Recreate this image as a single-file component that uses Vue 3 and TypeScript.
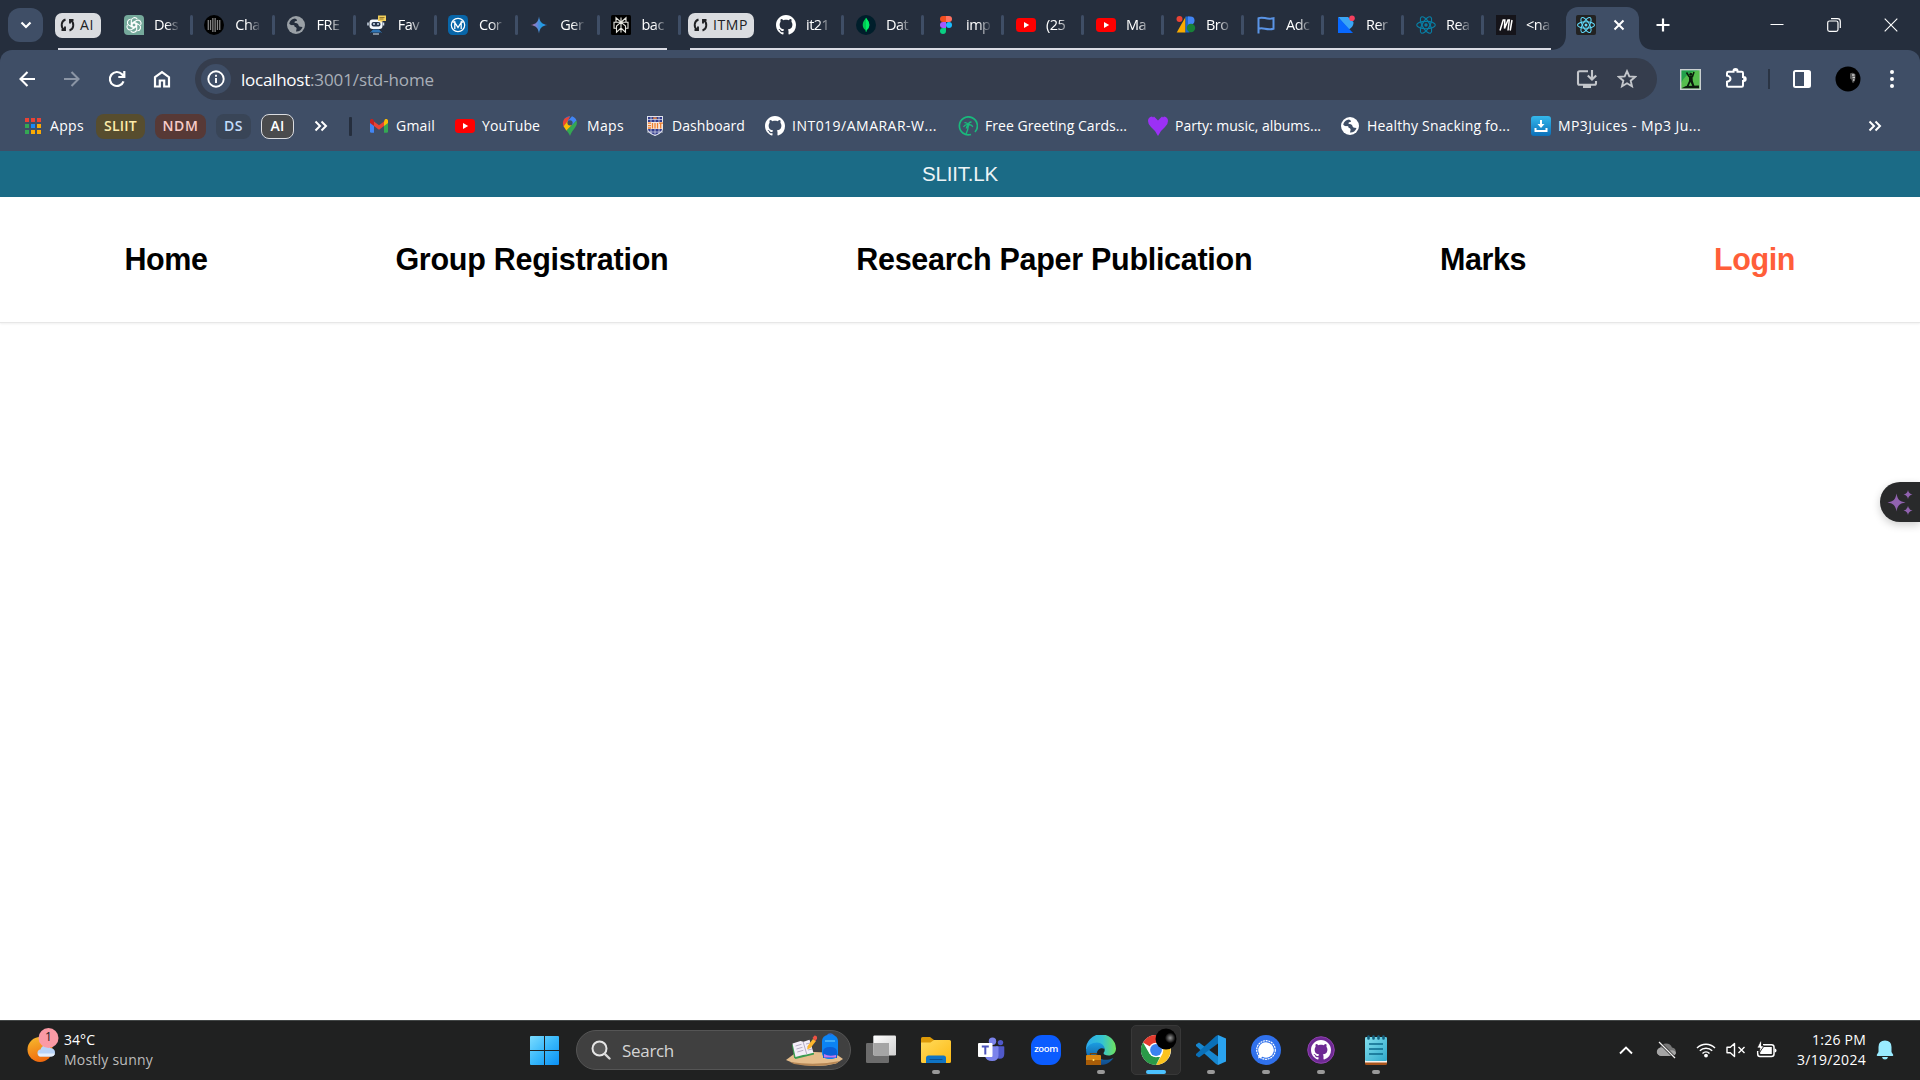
<script setup lang="ts">
import { h, type FunctionalComponent } from 'vue'

interface Tab { icon: string; title: string }
interface Bookmark { icon: string; label: string; text: number; slot: number }
interface TaskApp { icon: string; state: '' | 'open' | 'active' }

// Spreads a label's letters so that it fills exactly the given width.
const vFit = {
  mounted(el: HTMLElement, binding: { value: number }) {
    const n = (el.textContent ?? '').trim().length
    const natural = el.getBoundingClientRect().width
    el.style.letterSpacing = `${((binding.value - natural) / n).toFixed(3)}px`
  },
}

const petals = [0, 60, 120, 180, 240, 300]
  .map((a) => `<path d="M10 7.600 7.300 9.200V5.600a3.200 3.200 0 0 1 6-1.300M10 7.600l3.600 2.100" transform="rotate(${a} 10 10)"/>`)
  .join('')

const dotField = [-2.5, -1.5, -0.5, 0.5, 1.5, 2.5]
  .flatMap((x) => [-3, -2, -1, 0, 1, 2, 3].map((y) => [x, y]))
  .filter(([x, y]) => x * x + y * y < 11)
  .map(([x, y]) => `<circle cx="${10 + x * 2.3}" cy="${10 + y * 2}" r=".75"/>`)
  .join('')

const art: Record<string, string> = {
  gpt: `<path d="M4 0h12q4 0 4 4v16H4q-4 0-4-4V4q0-4 4-4Z" fill="#75a99b"/><g fill="none" stroke="#fff" stroke-width="1.100">${petals}</g>`,
  dots: `<circle cx="10" cy="10" r="10" fill="#000"/><g fill="#d0d0d0">${dotField}</g>`,
  globe: '<circle cx="10" cy="10" r="9" fill="#9aa0a6"/><path d="M9 3.500C6 4 4 5.500 3.200 8.500c1 1.500 2 1.800 3.800 1.600 1.600 0 1.800 1.200 1.600 2 1.200 0 2 .6 2 1.700L10 16.600c3 .2 5.500-1.500 6.500-4.600l-2-.3c-1.500-.2-2-1-2.200-2.200-.6-1.300-2.300-1.500-3.500-1.600-.8-1 .3-1.900 1.200-1.900.9 0 1.100-.4.900-1.200Z" fill="#252e3d"/>',
  globeWhite: '<circle cx="10" cy="10" r="9" fill="#fff"/><path d="M9 3.500C6 4 4 5.500 3.200 8.500c1 1.500 2 1.800 3.800 1.600 1.600 0 1.800 1.200 1.600 2 1.200 0 2 .6 2 1.700L10 16.600c3 .2 5.500-1.500 6.500-4.600l-2-.3c-1.500-.2-2-1-2.200-2.200-.6-1.300-2.300-1.500-3.500-1.600-.8-1 .3-1.900 1.200-1.900.9 0 1.100-.4.900-1.200Z" fill="#3f4e66"/>',
  robot: '<rect x="2.500" y="4.500" width="13" height="9.500" rx="3" fill="#f4f8fc"/><path d="M1 7.500v3M16.500 7.500v3" stroke="#cfdcea" stroke-width="1.500"/><rect x="4.500" y="7" width="9" height="4.500" rx="2" fill="#26364d"/><circle cx="7" cy="9" r="1" fill="#cde"/><circle cx="11" cy="9" r="1" fill="#cde"/><path d="M6 15h6l1 2H5ZM3.500 17.500l2-1.500M14.500 17.500l-2-1.500" fill="#2f75b5" stroke="#2f75b5"/><path d="M6 19h6" stroke="#d6e6f5"/><path d="M11 .5h8v5.500h-3.500l-2 2V6H11Z" fill="#f2cf5b"/><path d="M12.500 2.500h5M12.500 4h4" stroke="#7d6423" stroke-width=".8"/>',
  m365: '<rect width="20" height="20" rx="4.500" fill="#0866a9"/><circle cx="10" cy="10" r="6.700" fill="none" stroke="#fff" stroke-width="1.200"/><path d="M6.800 14V7.500L10 12.500l3.200-5V14M4.500 7h3M12.500 7h3" fill="none" stroke="#fff" stroke-width="1.300"/>',
  gemini: '<defs><linearGradient id="gm"><stop stop-color="#c66a8a"/><stop offset=".35" stop-color="#6f85d8"/><stop offset=".65" stop-color="#1f9ce0"/><stop offset="1" stop-color="#3c8af0"/></linearGradient></defs><path d="M10 1.500C10.800 7 13 9.200 18.500 10 13 10.800 10.800 13 10 18.500 9.200 13 7 10.800 1.500 10 7 9.200 9.200 7 10 1.500Z" fill="url(#gm)"/>',
  perplexity: '<rect width="20" height="20" rx="1.500" fill="#000"/><g fill="none" stroke="#e5e5df" stroke-width="1.100"><path d="M10 2.500v15M10 7.200 5 2.800v4.400h10V2.800L10 7.200ZM3 7.200h14v6h-2.500V11L10 7.200 5.500 11v2.200H3ZM5.500 11v6.200L10 13l4.500 4.200V11"/></g>',
  github: '<path transform="scale(1.25)" fill="#fff" d="M8 0C3.580 0 0 3.580 0 8c0 3.540 2.290 6.530 5.470 7.590.4.070.55-.17.55-.38 0-.19-.01-.82-.01-1.490-2.010.37-2.530-.49-2.690-.94-.09-.23-.48-.94-.82-1.130-.28-.15-.68-.52-.01-.53.63-.01 1.080.58 1.230.82.72 1.210 1.870.87 2.330.66.07-.52.28-.87.51-1.070-1.780-.2-3.640-.89-3.640-3.950 0-.87.31-1.590.82-2.150-.08-.2-.36-1.020.08-2.120 0 0 .67-.21 2.200.82.64-.18 1.320-.27 2-.27s1.360.09 2 .27c1.530-1.040 2.200-.82 2.200-.82.44 1.100.16 1.920.08 2.120.51.56.82 1.270.82 2.150 0 3.070-1.870 3.750-3.650 3.950.29.25.54.73.54 1.480 0 1.070-.01 1.930-.01 2.200 0 .21.15.46.55.38A8.010 8.010 0 0 0 16 8c0-4.420-3.580-8-8-8Z"/>',
  mongo: '<circle cx="10" cy="10" r="10" fill="#001e2b"/><path d="M10 2.800c-1.500 2.300-3.300 4-3.300 7.200 0 2.800 1.500 4.200 2.700 5l.3 1.800h.6l.3-1.800c1.200-.8 2.700-2.200 2.700-5 0-3.200-1.800-4.900-3.300-7.200Z" fill="#00c853"/><path d="M10 2.800v14h.3l.3-1.800c1.200-.8 2.700-2.200 2.700-5 0-3.200-1.800-4.900-3.300-7.200Z" fill="#00ed64"/>',
  figma: '<path d="M10 1H7a3 3 0 0 0 0 6h3Z" fill="#f24e1e"/><path d="M10 1h3a3 3 0 0 1 0 6h-3Z" fill="#ff7262"/><path d="M10 7H7a3 3 0 0 0 0 6h3Z" fill="#a259ff"/><circle cx="13" cy="10" r="3" fill="#1abcfe"/><path d="M7 13h3v3a3 3 0 1 1-3-3Z" fill="#0acf83"/>',
  youtube: '<rect y="3" width="20" height="14" rx="3.400" fill="#f00"/><path d="m8 7 5.200 3L8 13Z" fill="#fff"/>',
  zb: '<path d="M9.500 2v15.500H.7Z" fill="#f9ab00"/><circle cx="3.500" cy="4" r="3" fill="#ea4335"/><path d="M9.500 1.500h4v16h-4Z" fill="#1967d2"/><path d="M12 1.500h2.500a4 4 0 0 1 0 8H12Z" fill="#4285f4"/><circle cx="15" cy="13" r="4.200" fill="#188038"/>',
  flag: '<path d="M2.500 18.500v-16M2.500 3.200c5-2.200 7.500 2 15 0v10.500c-7 2-10-1.800-15 0" fill="none" stroke="#5a94e6" stroke-width="2"/>',
  render: '<path d="M2 2h10l5.500 5c0 4-2 6-5 7.500Z" fill="#3aa5f5"/><path d="M2 2v16h15Z" fill="#0868ff"/><circle cx="16" cy="3.200" r="2.800" fill="#f5405e"/>',
  react: '<g fill="none" stroke="#087ea4" stroke-width="1.150"><ellipse cx="10" cy="10" rx="9.300" ry="3.700"/><ellipse cx="10" cy="10" rx="9.300" ry="3.700" transform="rotate(60 10 10)"/><ellipse cx="10" cy="10" rx="9.300" ry="3.700" transform="rotate(120 10 10)"/></g><circle cx="10" cy="10" r="1.700" fill="#087ea4"/>',
  reactDark: '<rect width="20" height="20" rx="2" fill="#222"/><g fill="none" stroke="#61dafb" stroke-width="1.050"><ellipse cx="10" cy="10" rx="8.500" ry="3.300"/><ellipse cx="10" cy="10" rx="8.500" ry="3.300" transform="rotate(60 10 10)"/><ellipse cx="10" cy="10" rx="8.500" ry="3.300" transform="rotate(120 10 10)"/></g><circle cx="10" cy="10" r="1.500" fill="#61dafb"/>',
  mui: '<rect width="20" height="20" fill="#15141a"/><path d="M4 15.500 7.200 5h1.600l-.3 8.500L12 5h1.300L12 15.500M14.200 15.500 16 5" fill="none" stroke="#fff" stroke-width="1.500"/>',
  gmail: '<path d="M1 5v10.500q0 1.300 1.300 1.300H5V9Z" fill="#4285f4"/><path d="M19 5v10.500q0 1.300-1.300 1.300H15V9Z" fill="#34a853"/><path d="M15 5.500V10l4-3V5c0-2-2-2.500-3.200-1.500Z" fill="#fbbc04"/><path d="M5 10V5.500l5 3.800 5-3.800V10l-5 3.800Z" fill="#ea4335"/><path d="M1 5v2l4 3V5.500L4.200 3.500C3 2.500 1 3 1 5Z" fill="#c5221f"/>',
  maps: '<path d="M10 0a7 7 0 0 0-5.400 2.500L8 6Z" fill="#1a73e8"/><path d="M10 0 7.800 5.300l-4.300 5C2.400 7.400 2.800 4.700 4.600 2.500Z" fill="#ea4335"/><path d="m3.500 10.300 4.400-5.500 4.400 4-5.800 6Z" fill="#fbbc04"/><path d="M10 0c3 0 5.400 1.700 6.500 4.500L12 9.500 7.800 5 12 .3Z" fill="#4285f4"/><path d="M16.500 4.500c2 6-4 8-6.500 15.500-1-2.500-2-4-3.500-5.500Z" fill="#34a853"/><circle cx="10" cy="6.800" r="2.600" fill="#3f4e66"/>',
  crest: '<path d="M2 0h16v13q0 4-8 7-8-3-8-7Z" fill="#dfe2ee"/><path d="M3 1h14v5H3ZM3 13h14q0 3-7 6-7-3-7-6Z" fill="#333c8c"/><path d="M6 0v18M10 0v20M14 0v18M2 3.500h16M2 16h16" stroke="#dfe2ee" stroke-width=".7"/><path d="M2 6h16v7H2Z" fill="#f6e6dc"/><path d="M3 7.200h3M3 9.600h3M3 12h3M7.500 7v5.500M10 7v5.500M12.500 7v5.500M15.700 7v5.500M14 7.200h4M8 2.200h4" stroke="#ef7f2d" stroke-width="1.300" fill="none"/>',
  palm: '<path d="M13 18.500A9 9 0 1 1 17 16" fill="none" stroke="#19b97c" stroke-width="1.700"/><path d="M10.500 9c-2-.8-4 .2-5 2M10.500 9c-1-2-2.500-2.600-4-2.300M10.500 9c0-2 1.300-3 3-3M10.500 9c2-.6 3.700.3 4.200 2M10.500 9c-1.600 1-2.200 2-2.200 3.500M10.500 9c-.4 4-1.500 7-2.500 9" fill="none" stroke="#19b97c" stroke-width="1.400"/>',
  heart: '<path d="M10 20 7 15 3 11Q0 8.500 0 5q0-4 4-4.500l1 1 1-1 4 4 4-4 1 1 1-1q4 .5 4 4.500 0 3.500-3 6l-4 4Z" fill="#9b30f5"/>',
  mp3: '<defs><linearGradient id="mp" x2="0" y2="1"><stop stop-color="#35b8ec"/><stop offset="1" stop-color="#0b6fb8"/></linearGradient></defs><rect width="20" height="20" rx="3" fill="url(#mp)"/><path d="M10 4v5M4.500 12v3h11v-3" fill="none" stroke="#fff" stroke-width="2"/><path d="M6.500 8h7L10 12Z" fill="#fff"/>',
}

const taskArt: Record<string, string> = {
  view: '<defs><linearGradient id="tv1" x2="1" y2="1"><stop stop-color="#fff"/><stop offset="1" stop-color="#cfcfcf"/></linearGradient></defs><rect x="0" y="8" width="23" height="20" rx="1.200" fill="#6c6c6c"/><rect x="7.300" y=".5" width="22.700" height="20" rx="1.200" fill="url(#tv1)"/><path d="M7.300 8H23v12.500H8.500q-1.200 0-1.200-1.200Z" fill="#a5a5a5"/>',
  explorer: '<defs><linearGradient id="ex" x2="1" y2="1"><stop stop-color="#ffdb5c"/><stop offset="1" stop-color="#fdb913"/></linearGradient></defs><path d="M1.500 2H9l4 3v6H0V3.500Q0 2 1.500 2Z" fill="#dd9a08"/><path d="M0 7.500h9.500L13 5h15.500Q30 5 30 6.500v20q0 1.500-1.500 1.500h-27Q0 28 0 26.500Z" fill="url(#ex)"/><path d="M5 28v-5q0-2.500 2.500-2.500h15Q25 20.500 25 23v5Z" fill="#0f74c4"/><path d="M9 24.500h12" stroke="#0a4f8f" stroke-width="1.200" stroke-linecap="round"/>',
  teams: '<circle cx="16.500" cy="6.300" r="3.700" fill="#7b83eb"/><circle cx="24.500" cy="7.600" r="2.700" fill="#5059c9"/><path d="M20 11.200h7.500q.8 0 .8.800v7q0 4.800-4.600 4.800-3.700 0-3.700-4Z" fill="#5059c9"/><path d="M9 11.200h12.500q1 0 1 1v8q0 5.800-6.300 5.800T9 21Z" fill="#7b83eb"/><rect x="2" y="8" width="14.500" height="14" rx="1" fill="#fff"/><path d="M5.800 11.500h7M9.300 11.500v8" stroke="#4b53bc" stroke-width="2"/>',
  edge: '<defs><linearGradient id="e1"><stop stop-color="#2aa9ee"/><stop offset=".55" stop-color="#35c4d0"/><stop offset="1" stop-color="#6fe35b"/></linearGradient><linearGradient id="e2" x2="0" y2="1"><stop stop-color="#1b9de2"/><stop offset="1" stop-color="#114a8b"/></linearGradient></defs><path d="M0 15A15 15 0 0 1 30 13.500c0 4.500-3.500 7-7.500 7-3.500 0-6-1.400-4.500-3.300 2-3-.5-7.500-6-7.500C7 9.700 2 12 0 15Z" fill="url(#e1)"/><path d="M0 15c1-4.500 6-7.500 11-7.500 4.300 0 7.500 3 7.700 6.500-4-2-7.700.6-7.700 4.500 0 5.500 7.500 8.500 16.500 4.500C22 31 12 32 5 26Q0 21 0 15Z" fill="url(#e2)"/><rect x="0" y="20" width="15" height="10" rx="1" fill="#d98612"/><path d="M0 25h15v4q0 1-1 1H1q-1 0-1-1Z" fill="#a75c08"/><path d="M4.500 20v-1.300h6V20" fill="none" stroke="#6d4310" stroke-width="1.300"/><circle cx="7.500" cy="25" r="1" fill="#ffe16b"/>',
  chrome: '<circle cx="15" cy="15" r="15" fill="#fff"/><path d="M15 15 2 7.500A15 15 0 0 1 28 7.500H15Z" fill="#e33b2e"/><path d="M15 8h13a15 15 0 0 1-13 22l6.500-11.200Z" fill="#fcc31e"/><path d="M2 7.500 8.500 18.800 15 22l4 0-4 8A15 15 0 0 1 2 7.500Z" fill="#2a9a48"/><circle cx="15" cy="15" r="7.300" fill="#fff"/><circle cx="15" cy="15" r="5.900" fill="#3b82f0"/>',
  vscode: '<path d="M3 7.500 0 9.500v1.400L20 29l2 1v-8.500Z" fill="#1787d0"/><path d="M22 0v8.500L3 22.500l-3-2V19L20 1Z" fill="#0a70b8"/><path d="M22 0 30 3.500v23L22 30Z" fill="#2aa3ef"/>',
  signal: '<circle cx="15" cy="15" r="15" fill="#3071ec"/><circle cx="15" cy="15" r="9.300" fill="none" stroke="#fff" stroke-width="1.200" stroke-dasharray="2 .7"/><path d="M15 7.300a7.700 7.700 0 1 1-3.500 14.500L7 23.500l1.300-4.600A7.700 7.700 0 0 1 15 7.300Z" fill="#fff"/>',
  notepad: '<defs><linearGradient id="np" x2="1" y2="1"><stop stop-color="#83e0ee"/><stop offset="1" stop-color="#2fa9cc"/></linearGradient></defs><path d="M4 25h22v3.500q0 1.500-1.500 1.500h-19Q4 30 4 28.500Z" fill="#a9541b"/><path d="M4 25h22v2.500H4Z" fill="#f6f2ee"/><rect x="4" y="2" width="22" height="24" rx="1.300" fill="url(#np)"/><path d="M8 9h14M8 14h14M8 19h14" stroke="#0c6a8c" stroke-width="1.700"/><path d="M7.500 1.500v2M12.500 1.500v2M17.500 1.500v2M22.500 1.500v2" stroke="#155f7d" stroke-width="2.600" stroke-linecap="round"/>',
  desktop: `<circle cx="15" cy="15" r="13.300" fill="#6e2a94" stroke="#8f3fae" stroke-width="1"/><g transform="translate(5 5)">${art.github}</g>`,
}

const Glyph: FunctionalComponent<{ name: string }> = (p) =>
  h('svg', { width: 20, height: 20, viewBox: '0 0 20 20', innerHTML: art[p.name] })
Glyph.props = ['name']
const TaskGlyph: FunctionalComponent<{ name: string }> = (p) =>
  h('svg', { width: 30, height: 30, viewBox: '0 0 30 30', innerHTML: taskArt[p.name] })
TaskGlyph.props = ['name']

const groupOne: Tab[] = [
  { icon: 'gpt', title: 'Des' },
  { icon: 'dots', title: 'Cha' },
  { icon: 'globe', title: 'FRE' },
  { icon: 'robot', title: 'Fav' },
  { icon: 'm365', title: 'Cor' },
  { icon: 'gemini', title: 'Ger' },
  { icon: 'perplexity', title: 'bac' },
]
const groupTwo: Tab[] = [
  { icon: 'github', title: 'it21' },
  { icon: 'mongo', title: 'Dat' },
  { icon: 'figma', title: 'imp' },
  { icon: 'youtube', title: '(25' },
  { icon: 'youtube', title: 'Ma' },
  { icon: 'zb', title: 'Bro' },
  { icon: 'flag', title: 'Adc' },
  { icon: 'render', title: 'Rer' },
  { icon: 'react', title: 'Rea' },
  { icon: 'mui', title: '<na' },
]
const bookmarks: Bookmark[] = [
  { icon: 'gmail', label: 'Gmail', text: 39, slot: 86 },
  { icon: 'youtube', label: 'YouTube', text: 58, slot: 105 },
  { icon: 'maps', label: 'Maps', text: 37, slot: 85 },
  { icon: 'crest', label: 'Dashboard', text: 73, slot: 120 },
  { icon: 'github', label: 'INT019/AMARAR-W...', text: 145, slot: 193 },
  { icon: 'palm', label: 'Free Greeting Cards...', text: 142, slot: 190 },
  { icon: 'heart', label: 'Party: music, albums...', text: 146, slot: 192 },
  { icon: 'globeWhite', label: 'Healthy Snacking fo...', text: 143, slot: 191 },
  { icon: 'mp3', label: 'MP3Juices - Mp3 Ju...', text: 143, slot: 190 },
]
const links = [
  { label: 'Home', width: 83 },
  { label: 'Group Registration', width: 273 },
  { label: 'Research Paper Publication', width: 396 },
  { label: 'Marks', width: 86 },
  { label: 'Login', width: 81, accent: true },
]
const apps: TaskApp[] = [
  { icon: 'view', state: '' },
  { icon: 'explorer', state: 'open' },
  { icon: 'teams', state: '' },
  { icon: 'zoom', state: '' },
  { icon: 'edge', state: 'open' },
  { icon: 'chrome', state: 'active' },
  { icon: 'vscode', state: 'open' },
  { icon: 'signal', state: 'open' },
  { icon: 'desktop', state: 'open' },
  { icon: 'notepad', state: 'open' },
]
</script>

<template>
  <div class="screen">
    <header class="strip">
      <button class="tab-search" aria-label="Search tabs">
        <svg width="14" height="14" viewBox="0 0 14 14"><path d="m2.500 4.500 4.500 4.500 4.500-4.500" fill="none" stroke="#fff" stroke-width="2.200" /></svg>
      </button>
      <section class="group first">
        <div class="tabs">
          <span class="chip ai">
            <svg width="15" height="16" viewBox="0 0 15 16"><path d="M5.500 2.500C1 4 .5 10 4 12.800M1.500 13h3.500V9.500M9.500 13.500C14 12 14.500 6 11 3.200M13.500 3H10v3.500" fill="none" stroke="#202124" stroke-width="1.900" /></svg>
            <span v-fit="14">AI</span>
          </span>
          <div v-for="t in groupOne" :key="t.icon" class="tab">
            <Glyph :name="t.icon" /><span class="title">{{ t.title }}</span><i class="sep"></i>
          </div>
        </div>
        <div class="underline"></div>
      </section>
      <section class="group second">
        <div class="tabs">
          <span class="chip itmp">
            <svg width="15" height="16" viewBox="0 0 15 16"><path d="M5.500 2.500C1 4 .5 10 4 12.800M1.500 13h3.500V9.500M9.500 13.500C14 12 14.500 6 11 3.200M13.500 3H10v3.500" fill="none" stroke="#202124" stroke-width="1.900" /></svg>
            <span v-fit="35">ITMP</span>
          </span>
          <div v-for="(t, i) in groupTwo" :key="i" class="tab">
            <Glyph :name="t.icon" /><span class="title">{{ t.title }}</span><i v-if="i < groupTwo.length - 1" class="sep"></i>
          </div>
        </div>
        <div class="underline"></div>
      </section>
      <div class="active-tab">
        <svg class="curve" width="16" height="16" viewBox="0 0 16 16"><path d="M16 0v16H0Q16 16 16 0Z" fill="#3f4e66" /></svg>
        <div class="active-body">
          <Glyph name="reactDark" />
          <svg width="12" height="12" viewBox="0 0 12 12"><path d="m1.500 1.500 9 9m0-9-9 9" stroke="#fff" stroke-width="2" /></svg>
        </div>
        <svg class="curve" width="16" height="16" viewBox="0 0 16 16"><path d="M0 0v16h16Q0 16 0 0Z" fill="#3f4e66" /></svg>
      </div>
      <svg class="new-tab" width="14" height="14" viewBox="0 0 14 14"><path d="M7 .5v13M.5 7h13" stroke="#fff" stroke-width="2.200" /></svg>
      <div class="window-controls">
        <svg width="14" height="14" viewBox="0 0 14 14"><path d="M.5 6.500h13" stroke="#fff" /></svg>
        <svg width="14" height="14" viewBox="0 0 14 14"><path d="M4 .7h6.500q2.800 0 2.800 2.800V10" fill="none" stroke="#fff" stroke-width="1.200" /><rect x=".7" y="3" width="10.300" height="10.300" rx="1.800" fill="none" stroke="#fff" stroke-width="1.200" /></svg>
        <svg width="14" height="14" viewBox="0 0 14 14"><path d="m.7.7 12.600 12.600m0-12.600L.7 13.300" stroke="#fff" stroke-width="1.100" /></svg>
      </div>
    </header>

    <div class="chrome">
      <div class="toolbar">
        <div class="nav-icons">
          <svg width="18" height="18" viewBox="0 0 18 18"><path d="M17 9H3M9.500 2 2.500 9l7 7" fill="none" stroke="#fff" stroke-width="2.100" /></svg>
          <svg width="18" height="18" viewBox="0 0 18 18"><path d="M1 9h14M8.500 2l7 7-7 7" fill="none" stroke="#8b95a5" stroke-width="2.100" /></svg>
          <svg width="18" height="18" viewBox="0 0 18 18"><path d="M15.500 11.300A7 7 0 1 1 14 4.200L16 6.500M16.300 1v6h-6" fill="none" stroke="#fff" stroke-width="2.200" /></svg>
          <svg width="18" height="18" viewBox="0 0 18 18"><path d="M2 7.200 9 2l7 5.200v9.300h-4.800v-6H6.800v6H2Z" fill="none" stroke="#fff" stroke-width="2.200" /></svg>
        </div>
        <div class="omnibox">
          <span class="info">
            <svg width="20" height="20" viewBox="0 0 20 20"><circle cx="10" cy="10" r="7.700" fill="none" stroke="#fff" stroke-width="1.900" /><path d="M10 9v5M10 5.700v2" stroke="#fff" stroke-width="1.900" /></svg>
          </span>
          <span class="url"><b v-fit="69">localhost</b><span v-fit="124">:3001/std-home</span></span>
          <svg class="install" width="22" height="20" viewBox="0 0 22 20"><path d="M12 2.200H3.500q-1.500 0-1.500 1.500v10.500q0 1.500 1.500 1.500h15q1.500 0 1.500-1.500V12M16 1v9M11.800 6.500 16 10.600l4.200-4.100" fill="none" stroke="#c3c6cb" stroke-width="2.100" /><path d="M7 16h8v3H7Z" fill="#c3c6cb" /></svg>
          <svg class="star" width="20" height="20" viewBox="0 0 20 20"><path d="m10 2.200 2.300 5.200 5.700.5-4.300 3.800 1.300 5.600-5-3-5 3 1.300-5.600L2 7.900l5.700-.5Z" fill="none" stroke="#c3c6cb" stroke-width="1.900" /></svg>
        </div>
        <div class="actions">
          <svg class="ext" width="21" height="21" viewBox="0 0 21 21"><rect x=".7" y=".7" width="19.600" height="19.600" fill="#22a04a" /><path d="M1 14Q5 6 12 3l8-2v19H1Z" fill="#55bd4d" /><path d="M6.500 3.500 9 7.500h3.500L14 3" fill="none" stroke="#0a1a0c" stroke-width="1.600" /><path d="M9 7h3.500l.3 5 2 6h-2l-2.300-5L8 18.500H6L9 12Z" fill="#0a1a0c" /><circle cx="10.800" cy="5.300" r="1.500" fill="#0a1a0c" /><path d="M1 19.500 6 17l13-.5v3Z" fill="#0a1a0c" /><rect x=".7" y=".7" width="19.600" height="19.600" fill="none" stroke="#c9cfd0" stroke-width="1.400" /></svg>
          <svg class="puzzle" width="22" height="22" viewBox="0 0 22 22"><path d="M3.500 4.700h5V4a2 2 0 0 1 4 0v.7h4.200q1.300 0 1.300 1.300v4h.7a2 2 0 0 1 0 4H18v4.500q0 1.200-1.300 1.200H3.300q-1.300 0-1.300-1.200v-3.700q3.500-.8 3.500-3.100T2 8.600V6q0-1.300 1.500-1.300Z" fill="none" stroke="#fff" stroke-width="2" /><path d="M8.500 4.200a2 2 0 0 1 4 0M18.200 10a2 2 0 0 1 0 4" fill="#fff" /></svg>
          <i class="bar"></i>
          <svg class="panel" width="18" height="18" viewBox="0 0 18 18"><rect x="1" y="1" width="16" height="16" rx="1.500" fill="none" stroke="#fff" stroke-width="2" /><path d="M11 1h6v16h-6Z" fill="#fff" /></svg>
          <svg class="avatar" width="26" height="26" viewBox="0 0 26 26"><circle cx="13" cy="13" r="12.500" fill="#000" /><path d="M15 7.500q3.500-2 5.500 1 .5 4.500-1.500 8-2 1-2-1 0-2.500-2-3Z" fill="#555" /><path d="M17 9h2.500M17.500 11.500h2.500M18 14h1.500" stroke="#ccc" stroke-width="1.500" /></svg>
          <svg class="dots" width="6" height="20" viewBox="0 0 6 20"><g fill="#fff"><circle cx="3" cy="3" r="2" /><circle cx="3" cy="10" r="2" /><circle cx="3" cy="17" r="2" /></g></svg>
        </div>
      </div>
      <div class="bookmarks">
        <svg class="grid" width="18" height="18" viewBox="0 0 18 18"><path d="M1 1h4v4H1ZM7 1h4v4H7ZM13 1h4v4h-4Z" fill="#ea4335" /><path d="M1 7h4v4H1ZM1 13h4v4H1Z" fill="#34a853" /><path d="M7 7h4v4H7Z" fill="#1a87f5" /><path d="M13 7h4v4h-4ZM7 13h4v4H7ZM13 13h4v4h-4Z" fill="#fbab04" /></svg>
        <span class="apps"><span v-fit="34">Apps</span></span>
        <span class="folder sliit"><span v-fit="33">SLIIT</span></span>
        <span class="folder ndm"><span v-fit="36">NDM</span></span>
        <span class="folder ds"><span v-fit="19">DS</span></span>
        <span class="folder ai-f"><span v-fit="14">AI</span></span>
        <svg class="more" width="14" height="12" viewBox="0 0 14 12"><path d="m1.500 1.500 4.500 4.500-4.500 4.500M7.500 1.500 12 6l-4.500 4.500" fill="none" stroke="#fff" stroke-width="2" /></svg>
        <i class="divider"></i>
        <span v-for="b in bookmarks" :key="b.label" class="bookmark" :style="{ width: b.slot + 'px' }">
          <Glyph :name="b.icon" /><span v-fit="b.text">{{ b.label }}</span>
        </span>
        <svg class="overflow" width="14" height="12" viewBox="0 0 14 12"><path d="m1.500 1.500 4.500 4.500-4.500 4.500M7.500 1.500 12 6l-4.500 4.500" fill="none" stroke="#fff" stroke-width="2" /></svg>
      </div>
    </div>

    <main class="page">
      <div class="banner"><span v-fit="76">SLIIT.LK</span></div>
      <nav class="menu">
        <a v-for="l in links" :key="l.label" v-fit="l.width" :class="{ accent: l.accent }">{{ l.label }}</a>
      </nav>
      <div class="assistant">
        <svg width="26" height="26" viewBox="0 0 26 26"><path d="M9.500 4.500c1 6 3 8 9 9-6 1-8 3-9 9-1-6-3-8-9-9 6-1 8-3 9-9ZM21 1q.7 3.800 4.500 4.500Q21.700 6.200 21 10q-.7-3.800-4.500-4.500Q20.300 4.800 21 1ZM21 17q.7 3.800 4.500 4.500-3.800.7-4.500 4.500-.7-3.800-4.500-4.500 3.800-.7 4.500-4.500Z" fill="#9162b0" /></svg>
      </div>
    </main>

    <footer class="taskbar">
      <div class="weather">
        <svg width="34" height="38" viewBox="0 0 34 38"><defs><linearGradient id="sun" x1=".3" x2=".6" y2="1"><stop stop-color="#f6b62c" /><stop offset="1" stop-color="#f0670d" /></linearGradient></defs><circle cx="14" cy="22.500" r="12.500" fill="url(#sun)" /><path d="M14 29.500a3.600 3.600 0 0 1 .5-7 5.500 5.500 0 0 1 10-1.500q4.500.5 4.500 4.500-.2 4-4 4Z" fill="#b9d4f8" /><path d="M12 26.500h17q-.8 3-4 3H14q-1.800-.5-2-3Z" fill="#e5effc" /><circle cx="22.500" cy="11" r="10" fill="#fb9aa5" /></svg>
        <b class="count">1</b>
        <div class="weather-text">
          <strong v-fit="31">34°C</strong><span v-fit="89">Mostly sunny</span>
        </div>
      </div>
      <svg class="start" width="29" height="29" viewBox="0 0 29 29"><defs><linearGradient id="win" x2="1" y2="1"><stop stop-color="#7bdcff" /><stop offset=".5" stop-color="#38b8fb" /><stop offset="1" stop-color="#0a90f5" /></linearGradient></defs><path d="M1 0h13v14H0V1Q0 0 1 0ZM15 0h13q1 0 1 1v13H15ZM0 15h14v14H1q-1 0-1-1ZM15 15h14v13q0 1-1 1H15Z" fill="url(#win)" /></svg>
      <div class="search">
        <svg width="20" height="20" viewBox="0 0 20 20"><circle cx="8.500" cy="8.500" r="7" fill="#5a5a5a" stroke="#e6e6e6" stroke-width="2" /><path d="m13.800 13.800 4.700 4.700" stroke="#d8d8d8" stroke-width="2.400" stroke-linecap="round" /></svg>
        <span v-fit="52">Search</span>
        <svg class="doodle" width="58" height="34" viewBox="0 0 58 34"><path d="M0 27 8 21q20-4 42 0l7 5-7 4.500Q28 36 6 29.500Z" fill="#e5bd8b" /><path d="m4 29 4 2q22 4 42-.5l4-2.500q-24 5-50 1Z" fill="#b78856" /><path d="m6 12 2-1 20 9v1.500L9.500 26 8 24.500Z" fill="#3b9b51" /><path d="m6.500 10.500 8-2.500 3 .7 6-2 4 13-7 1.800L17 22l-7.500 2Z" fill="#f3eef8" /><path d="m17.200 9 3.500 12M9.500 13l6-1.700M10.500 16l6-1.700M11.300 19l6-1.700M20 11l4-1M21 14l4-1M22 17l4-1" stroke="#a59ab5" stroke-width=".8" /><path d="m21 16.500 1-4 5-6.500 3 2-5.500 7Z" fill="#fdb62c" /><path d="m26.500 5 2-2.500q3 0 2.500 3.200L29.500 8Z" fill="#ef5244" /><path d="M41 3q3-4 7 0" fill="none" stroke="#2d6fd8" stroke-width="1.500" /><rect x="36" y="2" width="16" height="24" rx="6" fill="#0b83f3" /><path d="M39 8h10" stroke="#53baf9" stroke-width="1.500" /><path d="M37 25v-6q0-5 7-5t7 5v6Z" fill="#0b5fd6" /><path d="M38 21q5 3 12 1v2.500H38Z" fill="#c177ee" /></svg>
      </div>
      <div class="apps-row">
        <div v-for="a in apps" :key="a.icon" class="app" :class="a.state">
          <span v-if="a.icon === 'zoom'" class="zoom">zoom</span>
          <TaskGlyph v-else :name="a.icon" />
          <svg v-if="a.icon === 'chrome'" class="badge" width="22" height="22" viewBox="0 0 22 22"><defs><radialGradient id="bd" cx=".7" cy=".45" r=".25"><stop stop-color="#999" /><stop offset="1" stop-color="#000" /></radialGradient></defs><circle cx="11" cy="11" r="10.500" fill="url(#bd)" /></svg>
          <i class="mark"></i>
        </div>
      </div>
      <div class="tray">
        <svg width="14" height="20" viewBox="0 0 14 20"><path d="m1 13.500 6-6 6 6" fill="none" stroke="#fff" stroke-width="1.900" /></svg>
        <svg class="cloud" width="21" height="20" viewBox="0 0 21 20"><path d="M4.500 16a4.500 4.500 0 0 1-.3-8.500A6.300 6.300 0 0 1 16 7.500a4.300 4.300 0 0 1 .3 8.500Z" fill="#777" /><path d="M5 7.500q4 0 6 3l5 5.500H5Q1 15 .8 12 1 8 5 7.500ZM12 11q7-2 8 2-1 3-4 3Z" fill="#a5a5a5" /><path d="m3 2 16 16" stroke="#202020" stroke-width="2.600" /><path d="m3 2 16 16" stroke="#f2f2f2" stroke-width="1.200" /></svg>
        <svg class="wifi" width="20" height="20" viewBox="0 0 20 20"><g fill="none" stroke="#fff" stroke-width="1.400"><path d="M1 8a12.600 12.600 0 0 1 18 0M3.800 10.800a8.700 8.700 0 0 1 12.400 0M6.500 13.500a5 5 0 0 1 7 0" /></g><circle cx="10" cy="15.600" r="1.900" fill="#fff" /></svg>
        <svg class="sound" width="20" height="20" viewBox="0 0 20 20"><path d="M1 7.200h3.300L8.500 3.500v13l-4.200-3.700H1Z" fill="none" stroke="#fff" stroke-width="1.400" stroke-linejoin="round" /><path d="m12.500 7 6 6m0-6-6 6" stroke="#fff" stroke-width="1.400" /></svg>
        <svg class="battery" width="21" height="20" viewBox="0 0 21 20"><path d="M7 4.700h8.500Q18 4.700 18 7v7.300q0 2.200-2.500 2.200H4Q1.700 16.500 1.700 14v-3" fill="none" stroke="#fff" stroke-width="1.500" /><path d="M7.500 7h8.300v7H4.200v-2Z" fill="#fff" /><path d="M18.700 8.500q1.800 0 1.800 2t-1.800 2Z" fill="#fff" /><path d="M4.500 1 1 8h3l-1 5 5-7H5.500V1Z" fill="#fff" stroke="#202020" stroke-width=".8" /></svg>
        <div class="clock"><span v-fit="54">1:26 PM</span><span v-fit="69">3/19/2024</span></div>
        <svg class="bell" width="18" height="20" viewBox="0 0 18 20"><path d="M9 .5q6.500 0 6.500 6.500v5l1.800 3q0 1-1 1H1.700q-1 0-1-1l1.800-3V7Q2.500.5 9 .5Z" fill="#99ebff" /><path d="M6 17h6q-.5 2.500-3 2.500T6 17Z" fill="#99ebff" /></svg>
      </div>
    </footer>
  </div>
</template>

<style>
body { margin: 0; overflow: hidden; }
</style>

<style scoped>
* { box-sizing: border-box; }
.screen { width: 1920px; height: 1080px; display: flex; flex-direction: column; background: #fff; font-family: "Open Sans", "Noto Sans", sans-serif; font-size: 14px; line-height: 20px; white-space: nowrap; overflow: hidden; }
svg { display: block; flex: none; }
.strip { height: 50px; flex: none; display: flex; background: #252e3d; color: #fff; }
.tab-search { width: 35px; height: 34px; margin: 8px 0 0 8px; padding: 0; border: 0; border-radius: 12px; background: #3f4e66; display: flex; align-items: center; justify-content: center; }
.group { display: flex; flex-direction: column; flex: none; }
.first { width: 626px; margin-left: 12px; }
.second { width: 876px; margin-left: 7px; }
.tabs { height: 48px; display: flex; align-items: center; padding-top: 2px; }
.underline { height: 2px; background: #dadce4; margin: 0 14px 0 3px; }
.second .underline { margin: 0 13px 0 2px; }
.chip { height: 25px; display: flex; align-items: center; flex: none; background: #dadce0; color: #202124; border-radius: 7px; padding-left: 5px; gap: 5px; }
.ai { width: 46px; margin-right: 11px; }
.itmp { width: 66px; margin-right: 10px; }
.tab { width: 81.25px; flex: none; display: flex; align-items: center; padding-left: 12px; }
.first .tab:nth-child(n+3) { padding-left: 11px; }
.first .tab:nth-child(n+3) .title { margin-left: 11px; }
.second .tab { width: 80px; }
.title { width: 27px; margin-left: 10px; font-size: 14.500px; line-height: 24px; letter-spacing: -.5px; -webkit-mask-image: linear-gradient(90deg, #000 45%, transparent 96%); mask-image: linear-gradient(90deg, #000 45%, transparent 96%); }
.sep { width: 3px; height: 20px; border-radius: 2px; background: #3f4e66; margin-left: auto; }
.second .sep { margin-right: .5px; }
.active-tab { display: flex; align-items: flex-end; margin-left: -14px; flex: none; }
.active-body { width: 73px; height: 43px; background: #3f4e66; border-radius: 12px 12px 0 0; display: flex; align-items: center; gap: 17px; padding: 0 0 7px 10px; }
.new-tab { margin: 18px 0 0 1px; }
.window-controls { margin: 18px 22px 0 auto; display: flex; gap: 43px; }
.chrome { height: 101px; flex: none; background: linear-gradient(#252e3d 14px, #3f4e66 14px); }
.toolbar { height: 58px; background: #3f4e66; border-radius: 12px 12px 0 0; display: flex; align-items: center; }
.nav-icons { display: flex; gap: 27px; margin-left: 18px; }
.omnibox { width: 1462px; height: 42px; margin-left: 24px; border-radius: 21px; background: #353d4d; display: flex; align-items: center; padding-left: 6px; flex: none; }
.info { width: 30px; height: 30px; border-radius: 50%; background: #3f4e66; display: flex; align-items: center; justify-content: center; }
.url { margin-left: 10px; padding-top: 1px; font-size: 17px; line-height: 24px; color: #a9afb8; display: flex; }
.url b { font-weight: 400; color: #fff; }
.install { margin-left: auto; margin-right: 19px; }
.star { margin-right: 20px; }
.actions { display: flex; align-items: center; }
.ext { margin-left: 23px; }
.puzzle { margin-left: 24px; margin-top: -2px; }
.bar { width: 2px; height: 20px; background: #2a3444; margin-left: 21px; }
.panel { margin-left: 23px; }
.avatar { margin-left: 24px; }
.dots { margin-left: 28px; }
.bookmarks { height: 36px; display: flex; align-items: center; color: #fff; }
.grid { margin-left: 24px; }
.apps { margin-left: 8px; width: 46px; }
.folder { height: 25px; border-radius: 8px; display: flex; align-items: center; justify-content: center; font-weight: 600; flex: none; margin-right: 10px; }
.sliit { width: 49px; background: #574d2e; color: #fdebaa; }
.ndm { width: 51px; background: #573936; color: #f8cdc9; }
.ds { width: 35px; background: #394557; color: #c3dcfb; }
.ai-f { width: 33px; background: #4a4b4d; color: #fff; border: 1.500px solid #dadce0; margin-right: 20px; }
.divider { width: 3px; height: 19px; border-radius: 1px; background: #252e3d; margin: 0 17px 0 21px; }
.bookmark { display: flex; gap: 7px; flex: none; }
.overflow { margin-left: 147px; }
.page { flex: 1; position: relative; background: #fff; font-family: "Liberation Sans", Arial, sans-serif; }
.banner { height: 46px; background: #1b6b86; color: #edf4f6; font-size: 20.500px; display: flex; align-items: center; justify-content: center; }
.menu { height: 126px; padding: 0 125px 2px 124.500px; display: flex; align-items: center; justify-content: space-between; border-bottom: 1px solid #e7e7e7; box-shadow: 0 1px 2px #00000010; font-size: 30.500px; line-height: 36px; font-weight: 700; color: #000; }
.accent { color: #ff5e39; }
.assistant { position: absolute; right: 0; top: 331px; width: 40px; height: 40px; border-radius: 20px 0 0 20px; background: #292a2b; display: flex; align-items: center; padding-left: 7px; box-shadow: 0 3px 8px #0003; }
.taskbar { height: 60px; flex: none; display: flex; align-items: center; background: #202121; box-shadow: inset 0 1px #424646; color: #fff; }
.weather { position: relative; display: flex; width: 530px; padding-left: 26px; height: 46px; }
.count { position: absolute; left: 45px; top: 0; font-size: 12px; font-weight: 400; color: #202020; }
.weather-text { display: flex; flex-direction: column; align-items: flex-start; margin-left: 4px; padding-top: 3px; }
.weather-text strong { font-weight: 400; }
.weather-text span { color: #bcbcbc; }
.start { margin-right: 17px; }
.search { width: 275px; height: 40px; border-radius: 20px; background: #404040; border: 1px solid #555; display: flex; align-items: center; padding-left: 14px; font-size: 17px; color: #d5d5d5; flex: none; }
.search > span { margin-left: 11px; padding-top: 1px; }
.doodle { margin-left: auto; margin-right: 6px; }
.apps-row { display: flex; gap: 5px; margin-left: 5px; }
.app { position: relative; width: 50px; height: 50px; display: flex; align-items: center; justify-content: center; border-radius: 5px; border: 1px solid transparent; }
.active { background: #2d2d2d; border-color: #383838; }
.mark { display: none; position: absolute; left: 20px; bottom: 0; width: 8px; height: 4px; border-radius: 2px; background: #999; }
.open .mark { display: block; }
.active .mark { display: block; left: 14px; width: 20px; background: #4cc2ff; }
.badge { position: absolute; right: 3px; top: 2px; }
.zoom { width: 30px; height: 30px; border-radius: 11px; background: #0b5cff; font-size: 9.500px; font-weight: 600; line-height: 28px; text-align: center; letter-spacing: -.4px; }
.tray { display: flex; align-items: center; margin-left: auto; padding-right: 26px; }
.cloud { margin-left: 23px; }
.wifi { margin-left: 19px; }
.sound { margin-left: 10px; }
.battery { margin-left: 10px; }
.clock { width: 89px; display: flex; flex-direction: column; align-items: flex-end; padding-bottom: 1px; }
.bell { margin-left: 10px; }
</style>
